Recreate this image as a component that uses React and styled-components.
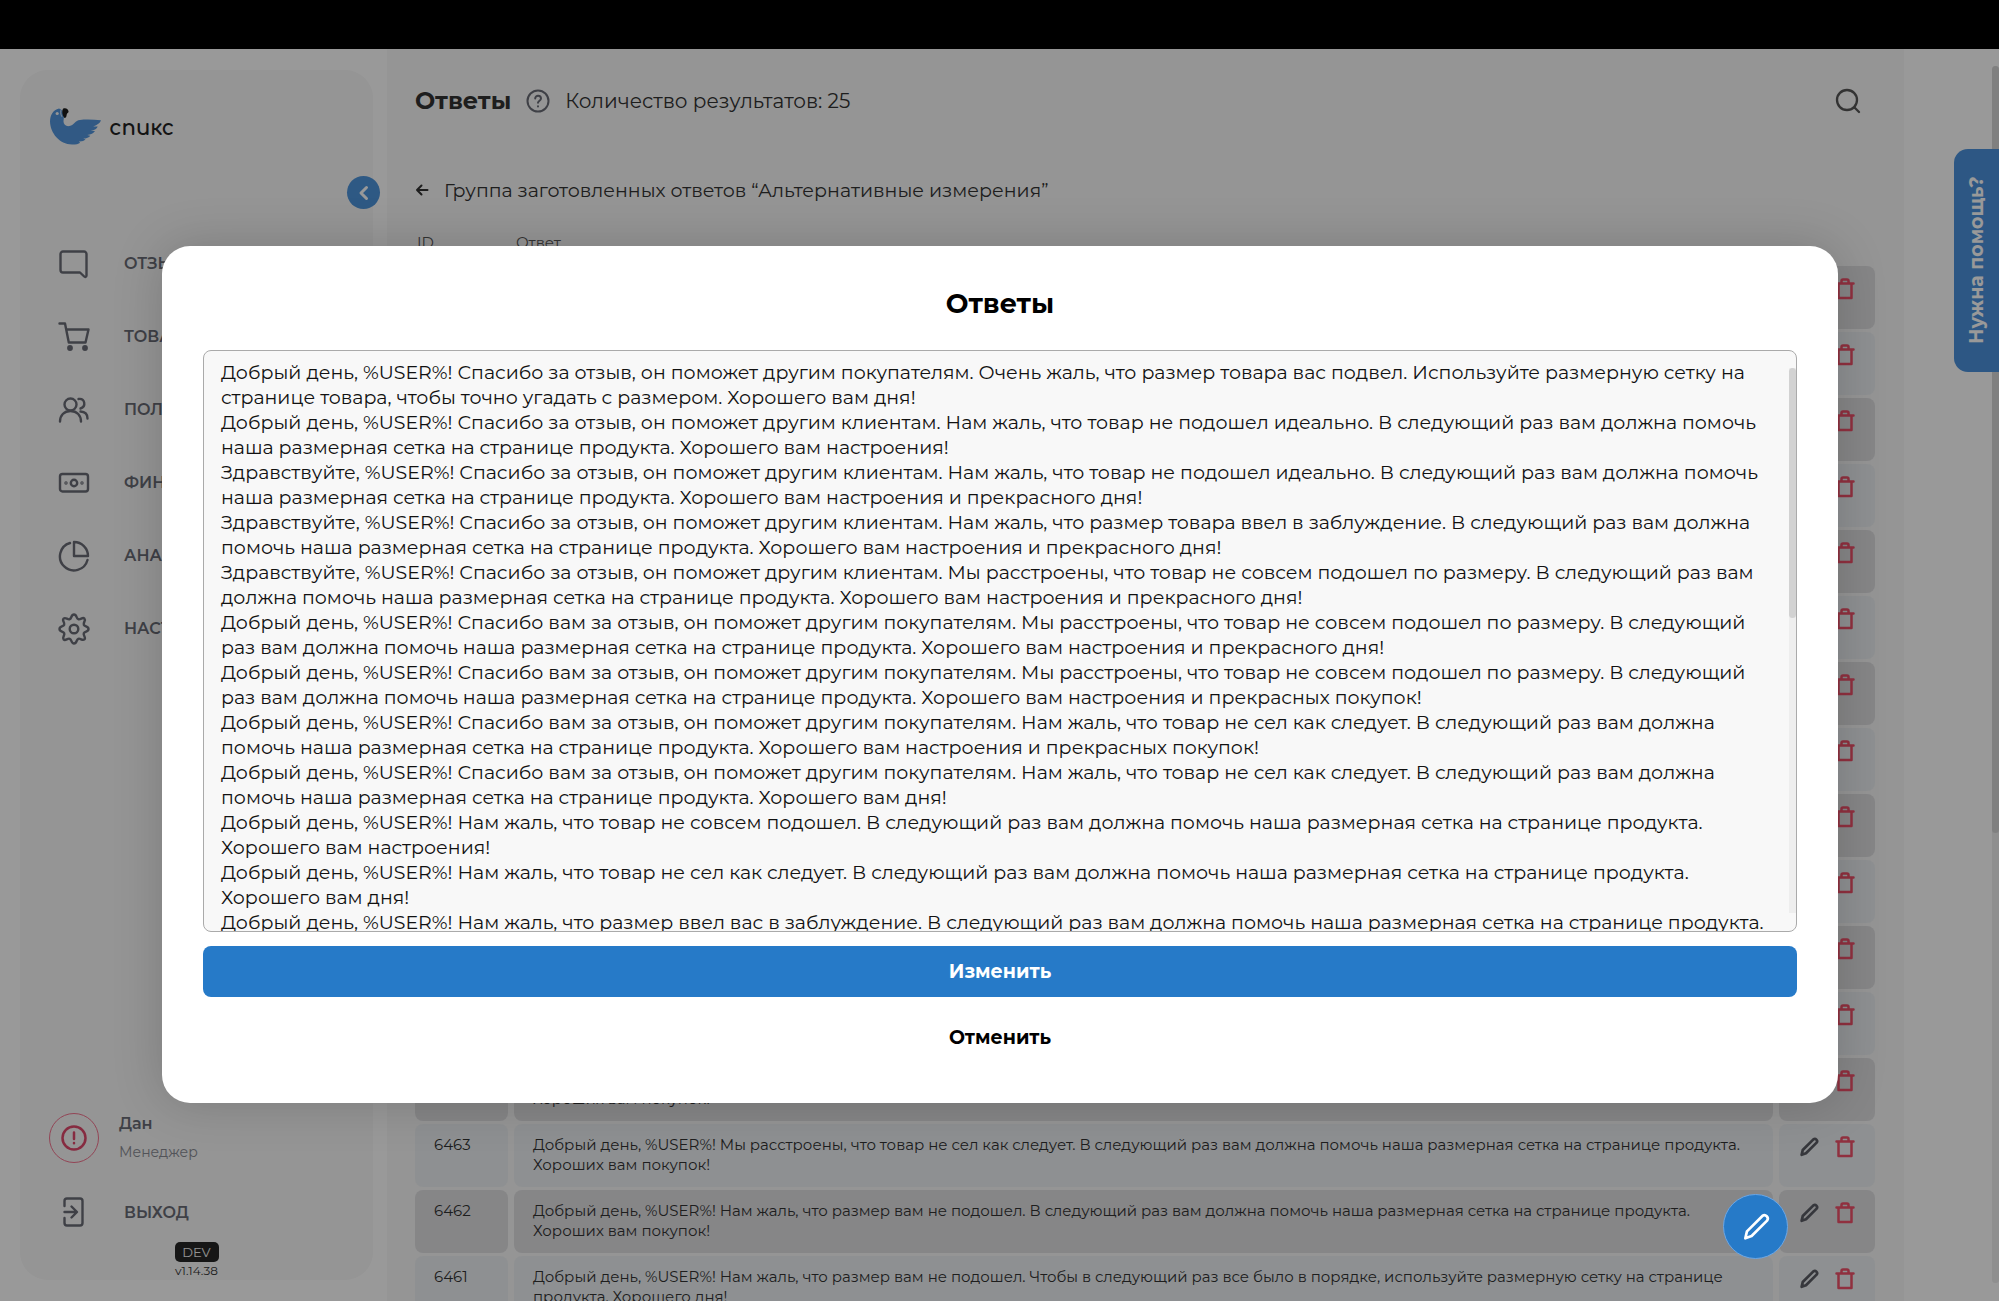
import React from 'react';
import styled, { createGlobalStyle } from 'styled-components';

const GlobalStyle = createGlobalStyle`
  *, *::before, *::after { box-sizing: border-box; }
  body {
    margin: 0;
    overflow: hidden;
    background: #fff;
    color: #333;
    font-family: Montserrat, Inter, "Noto Sans", sans-serif;
  }
  button, textarea { font-family: inherit; }
  button { cursor: pointer; padding: 0; border: 0; background: none; color: inherit; }
  h1, h2, p { margin: 0; }
  a { color: inherit; text-decoration: none; }
  svg { display: block; flex: none; }
`;

const Screen = styled.div`
  display: flex;
  flex-direction: column;
  height: 100vh;
`;
const TopStrip = styled.div`
  flex: none;
  height: 49px;
  background: #000;
`;
const Stage = styled.div`
  position: relative;
  flex: 1;
  min-height: 0;
  overflow: hidden;
`;
const Page = styled.div`
  display: flex;
  gap: 14px;
  height: 100%;
  padding-left: 20px;
  padding-right: 95px;
`;

const Sidebar = styled.aside`
  position: relative;
  flex: none;
  display: flex;
  flex-direction: column;
  width: 353px;
  margin: 21px 0;
  border-radius: 28px;
  background: #f8f8f8;
  color: #696c76;
`;
const Brand = styled.a`
  display: flex;
  align-items: center;
  gap: 8px;
  padding: 37px 0 0 30px;
  color: #222;
`;
const BrandName = styled.span`
  padding-top: 4px;
  font-family: Comfortaa, Inter, sans-serif;
  font-size: 21px;
  font-weight: 700;
  line-height: 34px;
`;
const Collapse = styled.button`
  position: absolute;
  top: 106px;
  right: -7px;
  display: grid;
  place-items: center;
  width: 33px;
  height: 33px;
  border-radius: 50%;
  background: #4e94dc;
  color: #fff;
`;
const Nav = styled.nav`
  display: flex;
  flex-direction: column;
  margin-top: 82px;
`;
const NavLink = styled.a`
  display: flex;
  align-items: center;
  gap: 34px;
  height: ${(p) => p.$height || 73}px;
  padding-left: 38px;
  font-size: 16px;
  font-weight: 600;
`;
const SidebarFooter = styled.div`
  margin-top: auto;
`;
const User = styled.div`
  display: flex;
  align-items: center;
  gap: 20px;
  margin-bottom: 18px;
  padding-left: 29px;
`;
const Avatar = styled.div`
  display: grid;
  place-items: center;
  width: 50px;
  height: 50px;
  border: 1px solid #f5738f;
  border-radius: 50%;
  color: #e0486c;
`;
const UserName = styled.p`
  font-size: 16px;
  line-height: 24px;
  font-weight: 600;
`;
const UserRole = styled.p`
  margin-top: 4px;
  font-size: 14px;
  line-height: 24px;
  color: #898b93;
`;
const Version = styled.div`
  display: flex;
  flex-direction: column;
  align-items: center;
  padding-bottom: 1px;
  font-size: 12px;
  line-height: 17px;
  color: #333;
`;
const Badge = styled.span`
  width: 44px;
  height: 20px;
  border-radius: 5px;
  background: #262626;
  color: #f4f4f4;
  font-size: 13px;
  line-height: 20px;
  text-align: center;
`;

const Content = styled.main`
  flex: 1;
  min-width: 0;
  padding: 0 29px 0 28px;
  background: #f8f8f8;
`;
const Header = styled.header`
  display: flex;
  align-items: center;
  height: 103px;
  padding-right: 14px;
`;
const Title = styled.h1`
  font-size: 24px;
  font-weight: 700;
`;
const Hint = styled.button`
  margin: 0 15px;
  color: #696c76;
`;
const Count = styled.span`
  font-size: 20px;
`;
const Search = styled.button`
  margin-left: auto;
  color: #555;
`;
const GroupLine = styled.div`
  display: flex;
  align-items: center;
  gap: 15px;
  height: 76px;
  font-size: 19px;
`;
const Table = styled.table`
  width: 100%;
  border-spacing: 0;
  table-layout: fixed;
  font-size: 15px;
  line-height: 20px;
`;
const HeadCell = styled.th`
  width: ${(p) => p.$width || 'auto'};
  height: 38px;
  padding: 0 2px 8px;
  font-size: 15px;
  font-weight: 400;
  text-align: left;
  color: #555;
`;
const Cell = styled.td`
  height: 66px;
  padding: 0 ${(p) => (p.$last ? 0 : 6)}px 3px 0;
  vertical-align: top;
`;
const CellBox = styled.div`
  display: flex;
  gap: 16px;
  height: 63px;
  padding: 11px 19px;
  border-radius: 8px;
  background: ${(p) => (p.$odd ? '#dfdfe2' : '#edf1f3')};
`;
const IconButton = styled.button`
  width: 20px;
  height: 24px;
  color: ${(p) => (p.$danger ? '#f0506a' : '#5a5c64')};
`;

const HelpTab = styled.button`
  position: absolute;
  top: 100px;
  right: 0;
  width: 45px;
  height: 223px;
  border-radius: 0 14px 14px 0;
  background: #4b92dc;
  color: #fff;
  font-size: 19px;
  font-weight: 700;
  writing-mode: vertical-rl;
  transform: rotate(180deg);
`;
const PageTrack = styled.div`
  position: absolute;
  top: 17px;
  right: 0;
  bottom: 18px;
  width: 7px;
  border-radius: 4px;
  background: #eee;
`;
const PageThumb = styled.div`
  height: 63%;
  border-radius: 4px;
  background: #d6d6d6;
`;

const Overlay = styled.div`
  position: absolute;
  inset: 0;
  display: flex;
  align-items: center;
  padding: 0 161px 2px 162px;
  background: rgba(0, 0, 0, 0.4);
`;
const Dialog = styled.form`
  display: flex;
  flex-direction: column;
  width: 100%;
  padding: 36px 41px 40px;
  border-radius: 28px;
  background: #fff;
  color: #000;
  box-shadow: 0 0 50px rgba(0, 0, 0, 0.18);
`;
const DialogTitle = styled.h2`
  margin-bottom: 24px;
  font-size: 27px;
  line-height: 44px;
  font-weight: 700;
  text-align: center;
`;
const Field = styled.div`
  position: relative;
  display: flex;
  margin-bottom: 14px;
`;
const TextArea = styled.textarea`
  width: 100%;
  height: 582px;
  padding: 9px 26px 0 17px;
  overflow: hidden;
  border: 1px solid #aaa;
  border-radius: 8px;
  outline: 0;
  resize: none;
  background: #f8f8f8;
  color: #111;
  font-size: 19px;
  line-height: 25px;
`;
const FieldTrack = styled.div`
  position: absolute;
  top: 18px;
  right: 1px;
  bottom: 19px;
  width: 7px;
  background: #eee;
`;
const FieldThumb = styled.div`
  height: 46%;
  border-radius: 4px;
  background: #d2d2d2;
`;
const DialogButton = styled.button`
  height: 51px;
  margin-bottom: ${(p) => (p.$primary ? 15 : 0)}px;
  border-radius: 8px;
  background: ${(p) => (p.$primary ? '#267ac8' : 'transparent')};
  color: ${(p) => (p.$primary ? '#fff' : '#000')};
  font-size: 19px;
  font-weight: 700;
`;
const EditFab = styled.button`
  position: absolute;
  right: 211px;
  bottom: 42px;
  display: grid;
  place-items: center;
  width: 65px;
  height: 65px;
  border: 1px solid #6aa6e6;
  border-radius: 50%;
  background: #267ac8;
  color: #fff;
`;

const Icon = ({ size = 32, box = 32, stroke = 2.4, children }) => (
  <svg width={size} height={size} viewBox={`0 0 ${box} ${box}`} fill="none" stroke="currentColor"
    strokeWidth={stroke} strokeLinecap="round" strokeLinejoin="round" aria-hidden="true">{children}</svg>
);

const Bird = () => (
  <svg width="51" height="37" viewBox="0 0 51 37" aria-hidden="true">
    <path d="M9 .6C3 2 0 7.500 0 13.500C.3 25 9.500 36.500 22 36.500c4 0 6.500-.4 8.200-1.800l-1.500-1.200c3 .2 5.300-.4 6.800-1.900l-2.200-1c3.200 0 5.600-.9 7-2.800l-3-.8c3.500-.2 6.400-1.500 7.700-3.900l-4.300-.2c4-.8 6.400-2.500 7-4.500l-4.500.1c4.200-1.500 7-3.500 7.800-6.200c-7-.7-14.500-1-21-.4c-5 .5-5.500 5-10.500 6.200c-3.500.6-6-1.500-6-4.500c0-2 .6-3 .2-5.600L12.200 2z" fill="#5295dc" />
    <path d="M13 .8c2.500-1.300 5.600.2 5.600 3.200c-.8 1-1.800 1.500-2 3.200c0 1.500-1 2.600-2 2.800c-2-1.700-3.200-6.500-1.600-9.200z" fill="#1c1c1c" />
    <path d="M11.700.8c-1.600 2-1.200 5.600.2 8" fill="none" stroke="#f8f8f8" strokeWidth=".8" />
    <circle cx="7.200" cy="5.500" r="1.600" fill="#f8f8f8" />
  </svg>
);

const PencilShape = () => <path d="M4 20.500l1.200-5.200L16.800 3.700a2.500 2.500 0 0 1 3.500 3.500L8.700 18.800z" />;

const navIcons = {
  chat: <Icon><path d="M5 3.500h21a2.500 2.500 0 0 1 2.500 2.500v21.500c0 1.500-1.500 1.800-2.300 1L22 24.500H5A2.500 2.500 0 0 1 2.500 22V6A2.500 2.500 0 0 1 5 3.500z" /></Icon>,
  cart: <Icon><path d="M1.500 2.500h5.500l3.800 19h16.700L30.500 8.500H8.300" /><circle cx="12" cy="27" r="1.700" fill="currentColor" /><circle cx="27" cy="27" r="1.700" fill="currentColor" /></Icon>,
  users: <Icon><circle cx="12.500" cy="10.500" r="6" /><path d="M2 27.500c0-6 4-10.500 10.500-10.500S23 21.500 23 27.500M20.500 5c6.500-1 8 7.500 2 9.500M22.500 17.500c4.500.2 7 3 7 7" /></Icon>,
  money: <Icon><rect x="2" y="7" width="28" height="17.500" rx="2.500" /><circle cx="16" cy="16" r="3.200" /><circle cx="8" cy="16" r=".5" fill="currentColor" /><circle cx="24" cy="16" r=".5" fill="currentColor" /></Icon>,
  pie: <Icon><path d="M12 3A14 14 0 1 0 29.500 20M16 2v14h14A14 14 0 0 0 16 2z" /></Icon>,
  gear: <Icon><circle cx="16" cy="16" r="4.300" /><path d="M16 1.500c3 0 2 3.800 4.300 4.700s4.300-2.600 6.100-.6s-1.500 4-.6 6.100s4.700 1.300 4.700 4.300s-3.800 2-4.700 4.300s2.600 4.300.6 6.100s-4-1.500-6.100-.6S19 30.500 16 30.500s-2-3.800-4.300-4.700s-4.300 2.600-6.100.6s1.500-4 .6-6.100s-4.700-1.300-4.700-4.300s3.800-2 4.700-4.300s-2.600-4.300-.6-6.100s4 1.500 6.100.6S13 1.500 16 1.500z" /></Icon>,
  exit: <Icon><path d="M6.500 10V5A2.500 2.500 0 0 1 9 2.500h13A2.500 2.500 0 0 1 24.500 5v22a2.500 2.500 0 0 1-2.500 2.500H9A2.500 2.500 0 0 1 6.500 27v-5M6.500 16H18.500M13.500 10.500l5.500 5.500L13.500 21.500" /></Icon>,
};

const navItems = [
  ['chat', 'ОТЗЫВЫ'], ['cart', 'ТОВАРЫ'], ['users', 'ПОЛЬЗОВАТЕЛИ'],
  ['money', 'ФИНАНСЫ'], ['pie', 'АНАЛИТИКА'], ['gear', 'НАСТРОЙКИ'],
];

const sized = 'Мы расстроены, что товар не сел как следует. В следующий раз вам должна помочь наша размерная сетка на странице продукта. Хороших вам покупок!';
const rows = Array.from({ length: 13 }, (_, i) => [6476 - i, `Добрый день, %USER%! ${sized}`]).concat([
  [6463, `Добрый день, %USER%! ${sized}`],
  [6462, 'Добрый день, %USER%! Нам жаль, что размер вам не подошел. В следующий раз вам должна помочь наша размерная сетка на странице продукта. Хороших вам покупок!'],
  [6461, 'Добрый день, %USER%! Нам жаль, что размер вам не подошел. Чтобы в следующий раз все было в порядке, используйте размерную сетку на странице продукта. Хорошего дня!'],
]);

const answers = [
  'Добрый день, %USER%! Спасибо за отзыв, он поможет другим покупателям. Очень жаль, что размер товара вас подвел. Используйте размерную сетку на странице товара, чтобы точно угадать с размером. Хорошего вам дня!',
  'Добрый день, %USER%! Спасибо за отзыв, он поможет другим клиентам. Нам жаль, что товар не подошел идеально. В следующий раз вам должна помочь наша размерная сетка на странице продукта. Хорошего вам настроения!',
  'Здравствуйте, %USER%! Спасибо за отзыв, он поможет другим клиентам. Нам жаль, что товар не подошел идеально. В следующий раз вам должна помочь наша размерная сетка на странице продукта. Хорошего вам настроения и прекрасного дня!',
  'Здравствуйте, %USER%! Спасибо за отзыв, он поможет другим клиентам. Нам жаль, что размер товара ввел в заблуждение. В следующий раз вам должна помочь наша размерная сетка на странице продукта. Хорошего вам настроения и прекрасного дня!',
  'Здравствуйте, %USER%! Спасибо за отзыв, он поможет другим клиентам. Мы расстроены, что товар не совсем подошел по размеру. В следующий раз вам должна помочь наша размерная сетка на странице продукта. Хорошего вам настроения и прекрасного дня!',
  'Добрый день, %USER%! Спасибо вам за отзыв, он поможет другим покупателям. Мы расстроены, что товар не совсем подошел по размеру. В следующий раз вам должна помочь наша размерная сетка на странице продукта. Хорошего вам настроения и прекрасного дня!',
  'Добрый день, %USER%! Спасибо вам за отзыв, он поможет другим покупателям. Мы расстроены, что товар не совсем подошел по размеру. В следующий раз вам должна помочь наша размерная сетка на странице продукта. Хорошего вам настроения и прекрасных покупок!',
  'Добрый день, %USER%! Спасибо вам за отзыв, он поможет другим покупателям. Нам жаль, что товар не сел как следует. В следующий раз вам должна помочь наша размерная сетка на странице продукта. Хорошего вам настроения и прекрасных покупок!',
  'Добрый день, %USER%! Спасибо вам за отзыв, он поможет другим покупателям. Нам жаль, что товар не сел как следует. В следующий раз вам должна помочь наша размерная сетка на странице продукта. Хорошего вам дня!',
  'Добрый день, %USER%! Нам жаль, что товар не совсем подошел. В следующий раз вам должна помочь наша размерная сетка на странице продукта. Хорошего вам настроения!',
  'Добрый день, %USER%! Нам жаль, что товар не сел как следует. В следующий раз вам должна помочь наша размерная сетка на странице продукта. Хорошего вам дня!',
  'Добрый день, %USER%! Нам жаль, что размер ввел вас в заблуждение. В следующий раз вам должна помочь наша размерная сетка на странице продукта.',
].join('\n');

function AnswerRow({ id, text, odd }) {
  return (
    <tr>
      <Cell><CellBox $odd={odd}>{id}</CellBox></Cell>
      <Cell><CellBox $odd={odd}>{text}</CellBox></Cell>
      <Cell $last>
        <CellBox $odd={odd}>
          <IconButton type="button" aria-label="Изменить ответ"><Icon size={22} box={24} stroke={3}><PencilShape /></Icon></IconButton>
          <IconButton type="button" $danger aria-label="Удалить ответ">
            <Icon size={22} box={22} stroke={2.5}><path d="M2.500 5.500h17M4.500 5.500v14.500h13V5.500M7.500 5.500V3a1.500 1.500 0 0 1 1.500-1.500h4A1.500 1.500 0 0 1 14.500 3v2.500" /></Icon>
          </IconButton>
        </CellBox>
      </Cell>
    </tr>
  );
}

export default function App() {
  return (
    <Screen>
      <GlobalStyle />
      <TopStrip />
      <Stage>
        <Page>
          <Sidebar>
            <Brand href="#"><Bird /><BrandName>спикс</BrandName></Brand>
            <Collapse type="button" aria-label="Свернуть меню"><Icon size={20} box={20} stroke={3}><path d="M12.500 4.500L7 10l5.500 5.500" /></Icon></Collapse>
            <Nav>
              {navItems.map(([icon, label]) => <NavLink href="#" key={icon}>{navIcons[icon]}{label}</NavLink>)}
            </Nav>
            <SidebarFooter>
              <User>
                <Avatar><Icon size={28} box={28} stroke={2.5}><circle cx="14" cy="14" r="11.500" /><path d="M14 8.500v6.500M14 19v.2" /></Icon></Avatar>
                <div><UserName>Дан</UserName><UserRole>Менеджер</UserRole></div>
              </User>
              <NavLink href="#" $height={60}>{navIcons.exit}ВЫХОД</NavLink>
              <Version><Badge>DEV</Badge>v1.14.38</Version>
            </SidebarFooter>
          </Sidebar>
          <Content>
            <Header>
              <Title>Ответы</Title>
              <Hint type="button" aria-label="Справка"><Icon size={24} box={24} stroke={2}><circle cx="12" cy="12" r="10.500" /><path d="M9.200 9.500c0-3.800 5.800-3.600 5.800 0c0 2.200-3 2.200-3 4.300M12 17.300v.1" /></Icon></Hint>
              <Count>Количество результатов: 25</Count>
              <Search type="button" aria-label="Поиск"><Icon size={26} box={26} stroke={2.3}><circle cx="12" cy="12" r="10" /><path d="M19.500 19.500l4.500 4.500" /></Icon></Search>
            </Header>
            <GroupLine>
              <button type="button" aria-label="Назад"><Icon size={14} box={14} stroke={2}><path d="M12.500 7H2M6.500 2.500L2 7l4.500 4.500" /></Icon></button>
              Группа заготовленных ответов “Альтернативные измерения”
            </GroupLine>
            <Table>
              <thead>
                <tr><HeadCell $width="99px">ID</HeadCell><HeadCell>Ответ</HeadCell><HeadCell $width="96px" aria-label="Действия" /></tr>
              </thead>
              <tbody>
                {rows.map(([id, text], i) => <AnswerRow key={id} id={id} text={text} odd={i % 2 === 0} />)}
              </tbody>
            </Table>
          </Content>
        </Page>
        <PageTrack><PageThumb /></PageTrack>
        <HelpTab type="button">Нужна помощь?</HelpTab>
        <Overlay>
          <Dialog role="dialog" aria-labelledby="dialog-title" onSubmit={(e) => e.preventDefault()}>
            <DialogTitle id="dialog-title">Ответы</DialogTitle>
            <Field>
              <TextArea aria-labelledby="dialog-title" spellCheck={false} defaultValue={answers} />
              <FieldTrack><FieldThumb /></FieldTrack>
            </Field>
            <DialogButton type="submit" $primary>Изменить</DialogButton>
            <DialogButton type="button">Отменить</DialogButton>
          </Dialog>
        </Overlay>
        <EditFab type="button" aria-label="Редактировать ответы"><Icon size={32} box={24} stroke={2}><PencilShape /></Icon></EditFab>
      </Stage>
    </Screen>
  );
}
